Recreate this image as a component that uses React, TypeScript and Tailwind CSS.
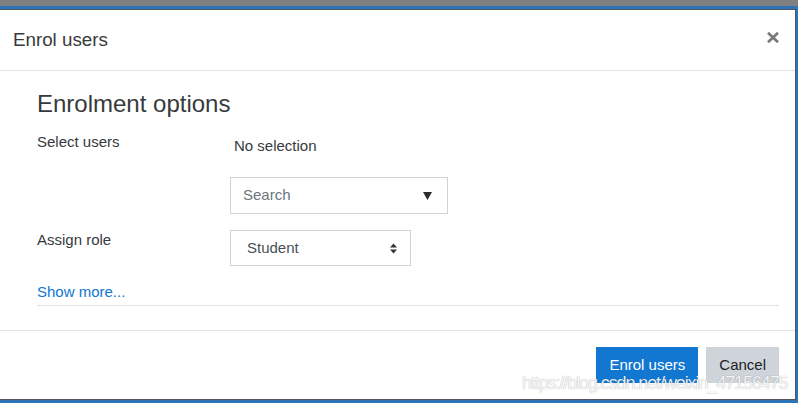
import React from "react";

const CloseIcon = () => (
  <svg width="12" height="11" viewBox="0 0 12 11" className="mb-[4.5px]">
    <path d="M1 0.8 L11 10.2 M11 0.8 L1 10.2" stroke="#7a7a7a" strokeWidth="2.8" />
  </svg>
);

const CaretDown = () => (
  <svg width="9" height="8" viewBox="0 0 9 8">
    <polygon points="0,0 9,0 4.5,8" fill="#2b2b2b" />
  </svg>
);

const SortArrows = () => (
  <svg width="7" height="11" viewBox="0 0 7 11">
    <polygon points="0,4.5 3.5,0.5 7,4.5" fill="#333" />
    <polygon points="0,6.5 7,6.5 3.5,10.5" fill="#333" />
  </svg>
);

export default function App() {
  return (
    <div className="relative w-[798px] h-[403px] overflow-hidden bg-[#808080] pt-[6px] font-['Liberation_Sans',Arial,sans-serif]">
      <div className="h-[397px] border-t-[3px] border-r-[2px] border-b-[3px] border-[#2f74b6]">
        <div className="flex h-full flex-col bg-white border-t border-r border-b border-[#4f5660]">
          {/* header */}
          <div className="flex h-[61px] shrink-0 items-center justify-between border-b border-[#dee2e6] pl-[13px] pr-[16px]">
            <h5 className="text-[18.75px] leading-[22.5px] text-[#373a3c]">Enrol users</h5>
            <CloseIcon />
          </div>

          {/* body */}
          <div className="flex-1 pt-[18px] pl-[37px] pr-[16px]">
            <h3 className="text-[24px] leading-[29px] text-[#373a3c]">Enrolment options</h3>

            <div className="mt-[13px] flex text-[15px] leading-[22.5px] text-[#373a3c]">
              <div className="w-[193px] shrink-0">Select users</div>
              <div className="flex flex-col">
                <div className="pt-[4px] pl-[4px]">No selection</div>
                <div className="mt-[19.5px] flex h-[37px] w-[218px] items-center justify-between border border-[#ced4da] pl-[12px] pr-[15px]">
                  <span className="text-[#6c757d]">Search</span>
                  <CaretDown />
                </div>
              </div>
            </div>

            <div className="mt-[16px] flex text-[15px] leading-[22.5px] text-[#373a3c]">
              <div className="w-[193px] shrink-0 -mt-[1px]">Assign role</div>
              <div className="flex h-[36px] w-[181px] items-center justify-between border border-[#ced4da] pl-[16px] pr-[13px]">
                <span className="text-[#495057]">Student</span>
                <SortArrows />
              </div>
            </div>

            <div className="mt-[15px] border-b border-[#dee2e6] pb-[1.5px] text-[15px] leading-[22.5px]">
              <a className="text-[#1177d1]">Show more...</a>
            </div>
          </div>

          {/* footer */}
          <div className="flex h-[69px] shrink-0 items-center justify-end gap-[8px] border-t border-[#dee2e6] pr-[16px]">
            <button className="h-[36px] border border-[#1177d1] bg-[#1177d1] px-[12px] text-[15px] text-white">
              Enrol users
            </button>
            <button className="h-[36px] border border-[#ced4da] bg-[#ced4da] px-[12px] text-[15px] text-[#1d2125]">
              Cancel
            </button>
          </div>
        </div>
      </div>

      <div className="pointer-events-none absolute left-[522px] top-[374px] text-[18px] leading-[18px] tracking-[-1.1px] whitespace-nowrap text-white/90 [text-shadow:0_0_1px_rgba(0,0,0,0.4)]">
        https://blog.csdn.net/weixin_47156475
      </div>
    </div>
  );
}
